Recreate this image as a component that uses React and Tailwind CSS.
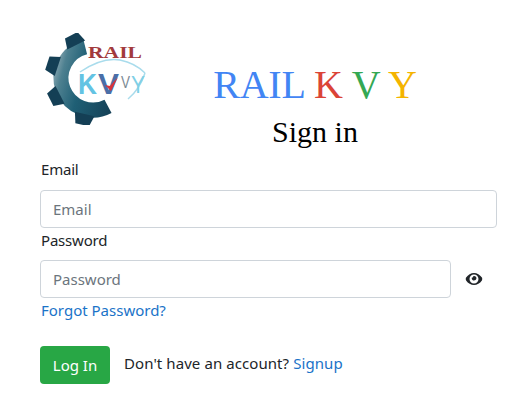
import React, { useState } from 'react';

const CX = 53;
const CY = 45;
const TOOTH_ANGLES = [-117, -162, 153, 103];

function polar(r, deg) {
    const a = (deg * Math.PI) / 180;
    return [CX + r * Math.cos(a), CY + r * Math.sin(a)];
}

function Logo() {
    // open gear ring, going round the left side from the top to the bottom right
    const [sx, sy] = polar(32, -104);
    const [ex, ey] = polar(32, 62);

    return (
        <svg width="110" height="92" viewBox="0 0 110 92" className="shrink-0">
            <defs>
                <linearGradient id="gearFill" gradientUnits="userSpaceOnUse" x1="3" y1="35" x2="80" y2="55">
                    <stop offset="0" stopColor="#c8d0d4" />
                    <stop offset="0.25" stopColor="#4d8090" />
                    <stop offset="0.5" stopColor="#1f5f75" />
                    <stop offset="1" stopColor="#143f55" />
                </linearGradient>
            </defs>
            <path d={`M${sx} ${sy} A32 32 0 1 0 ${ex} ${ey}`} fill="none" stroke="url(#gearFill)" strokeWidth="15" />
            {TOOTH_ANGLES.map((deg) => (
                <path
                    key={deg}
                    d={`M${CX + 37} ${CY - 10} L${CX + 48} ${CY - 7} L${CX + 48} ${CY + 7} L${CX + 37} ${CY + 10} Z`}
                    fill="url(#gearFill)"
                    transform={`rotate(${deg} ${CX} ${CY})`}
                />
            ))}
            <text x="48" y="25" textLength="54" lengthAdjust="spacingAndGlyphs" fontFamily="'Liberation Serif', serif" fontSize="16" fontWeight="700" fill="#a23a3c">RAIL</text>
            <path d="M40 39 Q62 24 80 27 Q95 30 105 40" fill="none" stroke="#a9dcec" strokeWidth="1.5" />
            <path d="M105 40 Q100 56 88 66" fill="none" stroke="#a9dcec" strokeWidth="1.5" />
            <text x="38" y="61" textLength="19" lengthAdjust="spacingAndGlyphs" fontFamily="'Liberation Sans', sans-serif" fontSize="29" fontWeight="700" fill="#63c3e3">K</text>
            <text x="58" y="61" textLength="21" lengthAdjust="spacingAndGlyphs" fontFamily="'Liberation Sans', sans-serif" fontSize="29" fontWeight="700" fill="#4a6fa8">V</text>
            <path d="M65 52 L71 58 L78 44 L70 53 Z" fill="#d8343c" />
            <text x="81" y="55" textLength="9" lengthAdjust="spacingAndGlyphs" fontFamily="'Liberation Sans', sans-serif" fontSize="17" fill="#7d8b96">V</text>
            <text x="91" y="60" textLength="14" lengthAdjust="spacingAndGlyphs" fontFamily="'Liberation Sans', sans-serif" fontSize="24" fill="#7fd0e6">Y</text>
        </svg>
    );
}

function EyeIcon() {
    return (
        <svg width="18" height="12" viewBox="0 0 576 384" fill="#212529">
            <path d="M288 0C191 0 98 56 35 147c-14 21-14 69 0 90 63 91 156 147 253 147s190-56 253-147c14-21 14-69 0-90C478 56 385 0 288 0zm0 336c-79 0-144-64-144-144S209 48 288 48s144 64 144 144-65 144-144 144zm0-240c-9 0-17 1-25 4 8 27-17 52-44 44-11 38 9 80 46 92 44 14 92-15 100-60 8-42-28-80-77-80z" />
        </svg>
    );
}

export default function App() {
    const [show, setShow] = useState(false);

    return (
        <div className="w-[530px] h-[410px] bg-white pl-[40px] pr-[33px] pt-[33px] text-[#212529] font-['Noto_Sans',sans-serif] text-[15px] overflow-hidden">
            {/* Header */}
            <div className="flex h-[117px]">
                <Logo />
                <div className="w-[328px] pt-[29px] flex flex-col items-center font-['Liberation_Serif',serif] ml-[1px]">
                    <div className="text-[40px] leading-[46px] whitespace-nowrap tracking-[-0.2px]">
                        <span className="text-[#4285f4]">RAIL</span>{' '}
                        <span className="text-[#db4437]">K</span>{' '}
                        <span className="text-[#34a853]">V</span>{' '}
                        <span className="text-[#f4b400]">Y</span>
                    </div>
                    <div className="text-[30px] leading-[34px] mt-[7px] text-black">Sign in</div>
                </div>
            </div>

            {/* Form */}
            <form onSubmit={(e) => e.preventDefault()}>
                <label className="block h-[40px] pt-[8px] pl-[1px] leading-[22px] tracking-[-0.2px]">Email</label>
                <input
                    type="email"
                    placeholder="Email"
                    className="block w-full h-[38px] px-[12px] bg-white border border-[#ced4da] rounded-[4px] outline-none placeholder:text-[#6c757d]"
                />
                <label className="block h-[32px] pt-[1px] pl-[1px] leading-[22px] tracking-[-0.2px]">Password</label>
                <div className="flex items-center">
                    <input
                        type={show ? 'text' : 'password'}
                        placeholder="Password"
                        className="block w-[411px] h-[38px] px-[12px] bg-white border border-[#ced4da] rounded-[4px] outline-none placeholder:text-[#6c757d]"
                    />
                    <button type="button" onClick={() => setShow(!show)} className="ml-[14px]">
                        <EyeIcon />
                    </button>
                </div>
                <a href="#" className="block pl-[1px] leading-[24px] text-[#1a73c8]">Forgot Password?</a>
                <div className="flex items-center mt-[24px]">
                    <button className="h-[38px] w-[70px] bg-[#28a745] text-white rounded-[4px]">Log In</button>
                    <span className="ml-[14px] mt-[-4px] tracking-[0.08px]">
                        Don't have an account? <a href="#" className="text-[#1a73c8]">Signup</a>
                    </span>
                </div>
            </form>
        </div>
    );
}
